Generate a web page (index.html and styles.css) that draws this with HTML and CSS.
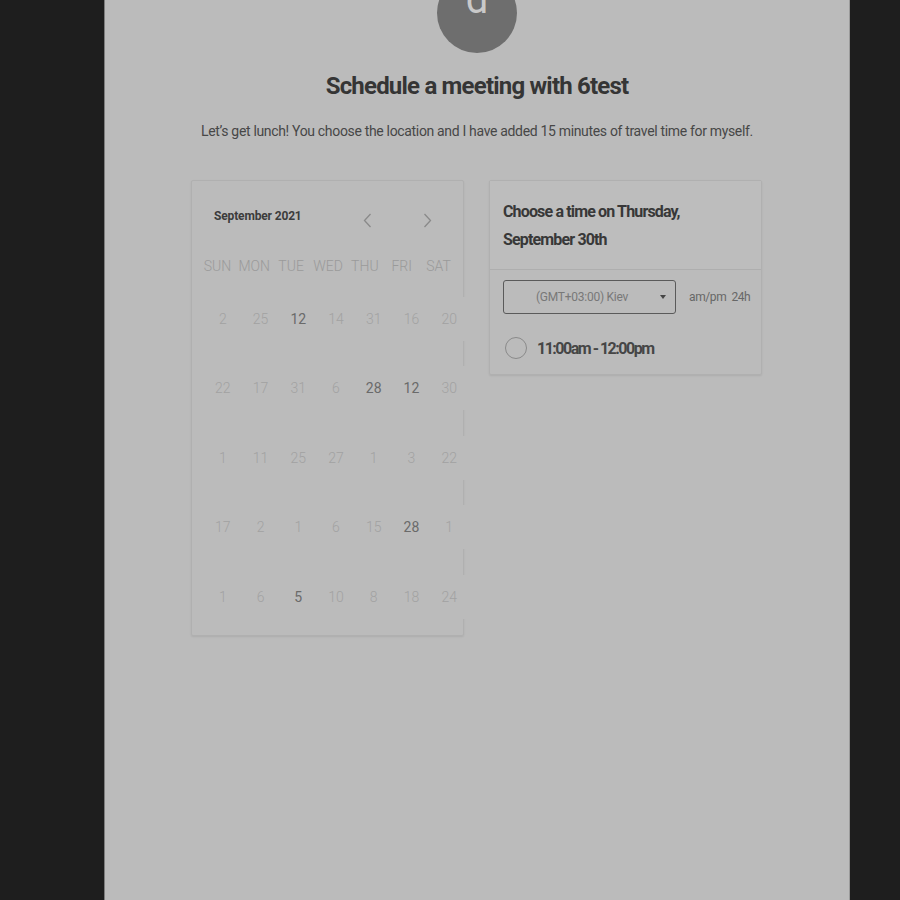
FILE: index.html
```html
<!DOCTYPE html>
<html>
<head>
<meta charset="utf-8">
<link rel="stylesheet" href="styles.css">
</head>
<body>
<main class="panel">
  <div class="avatar"><span class="avatar-letter">d</span></div>
  <h1 class="title">Schedule a meeting with 6test</h1>
  <p class="subtitle">Let’s get lunch! You choose the location and I have added 15 minutes of travel time for myself.</p>
  <div class="cards">
    <section class="card calendar">
      <div class="cal-head">
        <span class="cal-month">September 2021</span>
        <div class="cal-nav">
          <span class="nav-btn"><svg width="9" height="15" viewBox="0 0 9 15"><path d="M7.5 1 L1.5 7.5 L7.5 14" fill="none" stroke="#8a8a8a" stroke-width="1.3"/></svg></span>
          <span class="nav-btn"><svg width="9" height="15" viewBox="0 0 9 15"><path d="M1.5 1 L7.5 7.5 L1.5 14" fill="none" stroke="#8a8a8a" stroke-width="1.3"/></svg></span>
        </div>
      </div>
      <div class="weekdays">
        <span>SUN</span><span>MON</span><span>TUE</span><span>WED</span><span>THU</span><span>FRI</span><span>SAT</span>
      </div>
      <div class="days">
        <span>2</span><span>25</span><span class="on">12</span><span>14</span><span>31</span><span>16</span><span>20</span>
        <span>22</span><span>17</span><span>31</span><span>6</span><span class="on">28</span><span class="on">12</span><span>30</span>
        <span>1</span><span>11</span><span>25</span><span>27</span><span>1</span><span>3</span><span>22</span>
        <span>17</span><span>2</span><span>1</span><span>6</span><span>15</span><span class="on">28</span><span>1</span>
        <span>1</span><span>6</span><span class="on">5</span><span>10</span><span>8</span><span>18</span><span>24</span>
      </div>
    </section>
    <section class="card times">
      <div class="times-head">Choose a time on Thursday,<br>September 30th</div>
      <div class="times-body">
        <div class="tz-row">
          <div class="tz-select"><span class="tz-text">(GMT+03:00) Kiev</span><span class="tz-caret"></span></div>
          <span class="tz-format">am/pm&nbsp; 24h</span>
        </div>
        <div class="slot">
          <span class="radio"></span>
          <span class="slot-text">11:00am - 12:00pm</span>
        </div>
      </div>
    </section>
  </div>
</main>
</body>
</html>
```
FILE: styles.css
```css
html, body {
  margin: 0;
  padding: 0;
  background: #1e1e1e;
  font-family: Roboto, "Noto Sans", sans-serif;
}
.panel {
  box-sizing: border-box;
  width: 746px;
  height: 900px;
  margin-left: 104px;
  background: #bbbbbb;
  border-left: 1px solid #7c7c7c;
  border-right: 1px solid #9a9a9a;
  overflow: hidden;
  display: flex;
  flex-direction: column;
  align-items: center;
}
.avatar {
  width: 80px;
  height: 80px;
  margin-top: -27px;
  border-radius: 50%;
  background: #6e6e6e;
  display: flex;
  justify-content: center;
  box-sizing: border-box;
  padding-top: 7px;
}
.avatar-letter {
  font-size: 40px;
  line-height: 40px;
  color: #c9c9c9;
}
.title {
  margin: 19px 0 0;
  font-size: 24px;
  line-height: 28px;
  font-weight: 700;
  letter-spacing: -0.8px;
  color: #353535;
}
.subtitle {
  margin: 21px 0 0;
  font-size: 14px;
  line-height: 20px;
  letter-spacing: -0.33px;
  color: #474747;
}
.cards {
  margin: 39px 1px 0 0;
  display: flex;
  gap: 25px;
  align-items: flex-start;
}
.card {
  box-sizing: border-box;
  width: 273px;
  border: 1px solid #b0b0b0;
  border-radius: 2px;
  box-shadow: 0 1px 2px rgba(0,0,0,0.08);
}
.calendar {
  height: 456px;
  padding-top: 23px;
}
.cal-head {
  display: flex;
  align-items: flex-start;
  padding: 0 21px 0 22px;
  height: 24px;
}
.cal-month {
  font-size: 12px;
  line-height: 24px;
  font-weight: 700;
  letter-spacing: -0.15px;
  color: #3c3c3c;
}
.cal-nav {
  margin-left: auto;
  display: flex;
  gap: 30px;
  margin-top: 9px;
}
.nav-btn {
  width: 30px;
  height: 15px;
  display: flex;
  justify-content: center;
}
.weekdays {
  margin: 28px 0 0 7px;
  width: 258px;
  display: grid;
  grid-template-columns: repeat(7, 1fr);
  height: 20px;
  font-size: 14px;
  line-height: 20px;
  font-weight: 300;
  color: #9a9a9a;
  text-align: center;
}
.days {
  margin: 8px 0 0 12px;
  width: 264px;
  display: grid;
  grid-template-columns: repeat(7, 1fr);
  grid-auto-rows: 69.5px;
  font-size: 14px;
  font-weight: 300;
  color: #a2a2a2;
  text-align: center;
}
.days span {
  align-self: center;
  height: 44px;
  line-height: 44px;
  background: #bbbbbb;
}
.days .on {
  font-weight: 400;
  color: #6a6a6a;
}
.times-head {
  background: #bdbdbd;
  border-bottom: 1px solid #aeaeae;
  padding: 17px 13px 15px;
  font-size: 16px;
  line-height: 28px;
  font-weight: 700;
  letter-spacing: -0.85px;
  color: #383838;
}
.times-body {
  padding: 10px 8px 14px 13px;
}
.tz-row {
  display: flex;
  align-items: center;
  gap: 13px;
}
.tz-select {
  flex-shrink: 0;
  box-sizing: border-box;
  width: 173px;
  height: 34px;
  border: 1px solid #5a5a5a;
  border-radius: 3px;
  display: flex;
  align-items: center;
  padding: 0 9px 0 32px;
}
.tz-text {
  font-size: 12px;
  letter-spacing: -0.25px;
  color: #787878;
  white-space: nowrap;
}
.tz-caret {
  margin-left: auto;
  width: 0;
  height: 0;
  border-left: 3px solid transparent;
  border-right: 3px solid transparent;
  border-top: 4px solid #454545;
}
.tz-format {
  font-size: 12px;
  letter-spacing: -0.4px;
  color: #676767;
  white-space: nowrap;
}
.slot {
  margin-top: 22px;
  display: flex;
  align-items: center;
  gap: 10px;
  padding-left: 2px;
  height: 24px;
}
.radio {
  box-sizing: border-box;
  width: 22px;
  height: 22px;
  border: 1.5px solid #8a8a8a;
  border-radius: 50%;
}
.slot-text {
  font-size: 16px;
  font-weight: 700;
  letter-spacing: -1.5px;
  color: #464646;
}
```
